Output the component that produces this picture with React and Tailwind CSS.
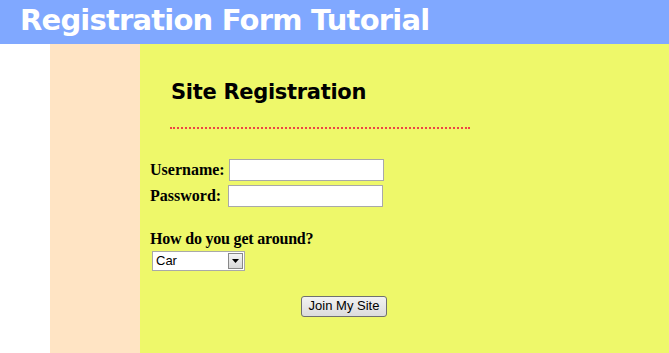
export default function App() {
  const comic = { fontFamily: '"Comic Sans MS", "DejaVu Sans", sans-serif' };
  const serif = { fontFamily: '"Liberation Serif", serif' };
  const sans = { fontFamily: '"Liberation Sans", Arial, sans-serif' };

  return (
    <div className="flex min-h-screen flex-col bg-white">
      <header className="h-[44px] bg-[#80a8ff] pl-[20px]">
        <h1 style={comic} className="text-[29px] font-bold leading-[40px] tracking-[-0.8px] text-white">
          Registration Form Tutorial
        </h1>
      </header>

      <div className="flex flex-1">
        <div className="w-[50px] bg-white" />
        <div className="w-[90px] bg-[#ffe4c4]" />
        <main className="flex-1 bg-[#eef86a] pl-[10px] pt-[33px]">
          <h2 style={comic} className="ml-[21px] text-[21px] font-bold leading-[30px] tracking-[-0.3px] text-black">
            Site Registration
          </h2>
          <div className="ml-[20px] mt-[20px] w-[300px] border-t-2 border-dotted border-[#ee4444]" />

          <form style={serif} className="mt-[29px] text-[16px] font-bold text-black">
            <div className="flex items-center">
              <label>Username:</label>
              <input type="text" className="ml-[4px] h-[22px] w-[155px] border border-[#a9a9a9] bg-white" />
            </div>
            <div className="mt-[2px] flex items-center">
              <label>Password:</label>
              <input type="password" className="ml-[7px] h-[22px] w-[155px] border border-[#a9a9a9] bg-white" />
            </div>

            <p className="mt-[21px] leading-[20px] tracking-[-0.2px]">How do you get around?</p>
            <div className="ml-[2px] mt-[2px] flex h-[20px] w-[93px] items-stretch border border-[#a9a9a9] bg-white">
              <span style={sans} className="flex-1 pl-[3px] text-[13px] font-normal leading-[18px]">Car</span>
              <span className="m-px flex w-[15px] items-center justify-center border border-[#888] bg-gradient-to-b from-[#f4f4f4] to-[#d8d8d8]">
                <svg width="7" height="4" viewBox="0 0 7 4"><path d="M0 0h7L3.5 4z" fill="#000" /></svg>
              </span>
            </div>

            <div className="mt-[22px] pl-[151px]">
              <button
                type="button"
                style={sans}
                className="h-[21px] w-[86px] rounded-[3px] border border-[#707070] bg-gradient-to-b from-[#f2f2f2] to-[#dcdcdc] text-[13px] font-normal leading-[18px] text-black"
              >
                Join My Site
              </button>
            </div>
          </form>
        </main>
      </div>
    </div>
  );
}
